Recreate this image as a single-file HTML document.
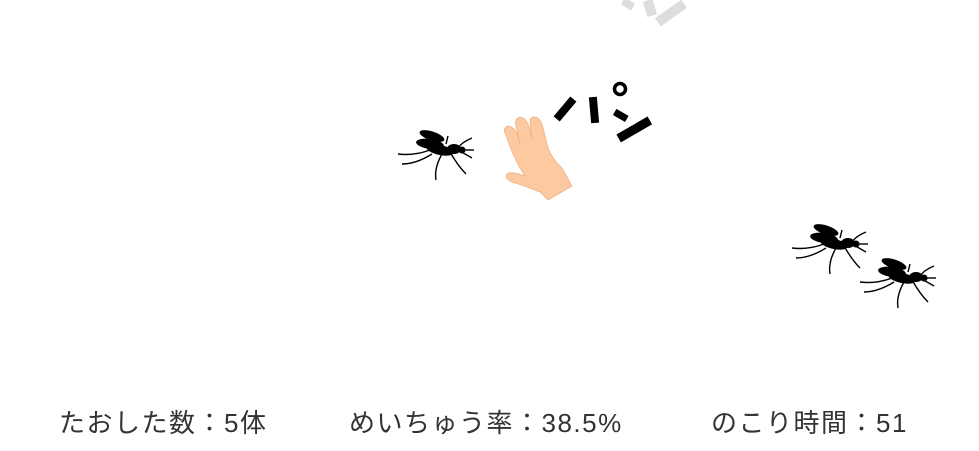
<!DOCTYPE html>
<html><head><meta charset="utf-8"><style>
html,body{margin:0;padding:0;background:#fff;width:979px;height:451px;overflow:hidden;position:relative}
.t{position:absolute;top:405px;font-family:"Liberation Sans","Noto Sans CJK JP",sans-serif;font-size:26px;letter-spacing:1.5px;color:#333;white-space:nowrap;line-height:36px}
svg{position:absolute;left:0;top:0}
</style></head><body>
<svg width="979" height="451" viewBox="0 0 979 451">
<defs>
<g id="m">
<g stroke="#000" stroke-width="1.4" fill="none">
<path d="M32 22 Q16 28 0 26"/>
<path d="M34 26 Q18 36 4 36"/>
<path d="M44 26 Q36 40 38 52"/>
<path d="M52 24 Q60 38 68 46"/>
<path d="M60 20 Q64 14 74 10"/>
<path d="M60 22 L76 22"/>
<path d="M60 22 L74 30"/>
<path d="M48 16 L50 8"/>
</g>
<ellipse cx="34" cy="8" rx="13" ry="4.5" transform="rotate(18 34 8)"/>
<ellipse cx="32" cy="16" rx="14" ry="5" transform="rotate(8 32 16)"/>
<ellipse cx="42" cy="22" rx="14" ry="5" transform="rotate(12 42 22)"/>
<ellipse cx="56" cy="21" rx="7" ry="5"/>
<circle cx="64" cy="22" r="3.5"/>
</g>
</defs>
<use href="#m" x="398" y="128"/>
<use href="#m" x="792" y="222"/>
<use href="#m" x="860" y="256"/>
<g fill="#000">
<rect x="561" y="96" width="8" height="26" transform="rotate(40 565 109)"/>
<rect x="590" y="97" width="8" height="26" transform="rotate(-5 594 110)"/>
<circle cx="620" cy="89" r="5.5" fill="none" stroke="#000" stroke-width="3.5"/>
<rect x="614" y="112" width="14" height="7" transform="rotate(30 621 115)"/>
<rect x="616" y="125" width="36" height="9" transform="rotate(-30 634 129)"/>
</g>
<g fill="#ddd">
<rect x="622" y="0" width="12" height="8" transform="rotate(30 628 4)"/>
<rect x="645" y="0" width="10" height="16" transform="rotate(-15 650 8)"/>
<rect x="655" y="8" width="32" height="10" transform="rotate(-35 671 13)"/>
</g>
<g fill="#fcc9a0" stroke="#f0b184" stroke-width="0.8">
<path d="M506 135 Q502 128 508 126 Q514 126 518 136 L520 144 L516 126 Q514 119 520 117 Q527 118 530 130 L532 140 L530 122 Q530 116 536 117 Q541 119 543 128 L548 148 Q553 160 562 168 L572 186 L548 200 L540 192 Q525 186 512 182 Q503 178 508 173 Q515 172 525 176 Q514 160 506 135 Z"/>
</g>
</svg>
<div class="t" style="left:59px">たおした数：5体</div>
<div class="t" style="left:349px">めいちゅう率：38.5%</div>
<div class="t" style="left:711px">のこり時間：51</div>
</body></html>
